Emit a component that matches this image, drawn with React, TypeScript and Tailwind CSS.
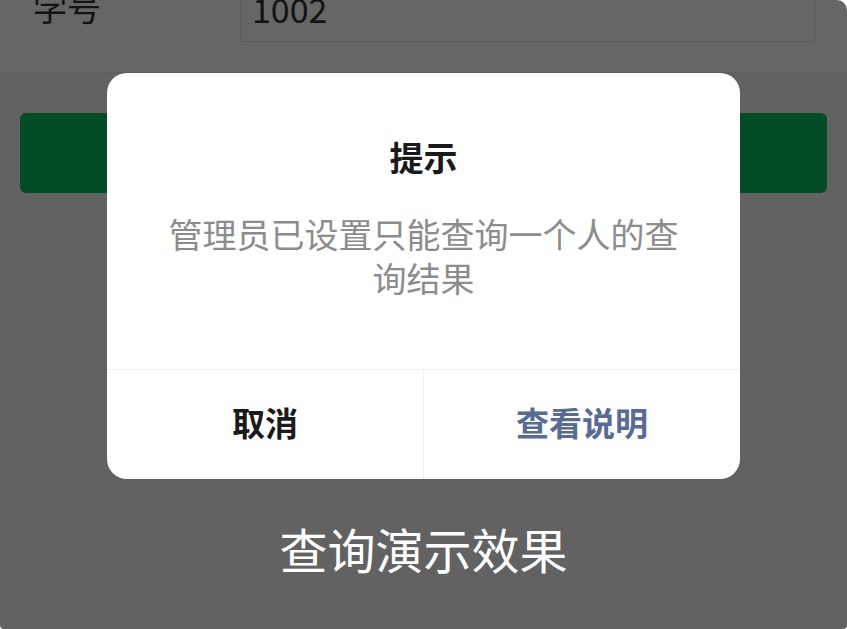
import { FC } from "react";

const font = { fontFamily: '"Noto Sans CJK SC", "Noto Sans", sans-serif' };

const App: FC = () => {
  return (
    <div style={font} className="h-[629px] w-[847px] bg-white">
      <div className="relative h-full w-full overflow-hidden rounded-tr-[10px] rounded-b-[4px] bg-[#f5f5f5]">
        {/* page underneath */}
        <div className="-mt-[60px] flex h-[133px] border-b border-[#e9e9e9] bg-white pl-[33px] pr-[32px] text-[#333]">
          <div className="w-[207px] pt-[50px] text-[34px] leading-[34px]">学号</div>
          <div className="mt-[2px] h-[100px] flex-1 border border-[#e5e5e5] pl-[11px] pt-[49px] text-[34px] leading-[34px]">
            1002
          </div>
        </div>
        <div className="px-[20px] pt-[40px]">
          <button className="flex h-[80px] w-full items-center justify-center rounded-[6px] bg-[#07c160] text-[34px] text-white">
            查询
          </button>
        </div>

        {/* mask + dialog */}
        <div className="absolute inset-0 flex flex-col items-center bg-black/60 pt-[73px]">
          <div className="flex w-[633px] flex-col overflow-hidden rounded-[20px] bg-white">
            <div className="px-[45px] pb-[69px] pt-[60px] text-center">
              <h2 className="text-[34px] font-bold leading-[48px] text-[#1a1a1a]">提示</h2>
              <p className="mt-[31px] text-[34px] leading-[44px] text-[#8c8c8c]">
                管理员已设置只能查询一个人的查询结果
              </p>
            </div>
            <div className="flex h-[110px] border-t border-[#f0f0f0]">
              <button className="flex flex-1 items-center justify-center pb-[4px] text-[33px] font-bold text-[#1a1a1a]">
                取消
              </button>
              <button className="flex flex-1 items-center justify-center border-l border-[#f0f0f0] pb-[4px] text-[33px] font-bold text-[#576b95]">
                查看说明
              </button>
            </div>
          </div>
          <div className="mt-[45px] text-[48px] leading-[48px] text-white">查询演示效果</div>
        </div>
      </div>
    </div>
  );
};

export default App;
